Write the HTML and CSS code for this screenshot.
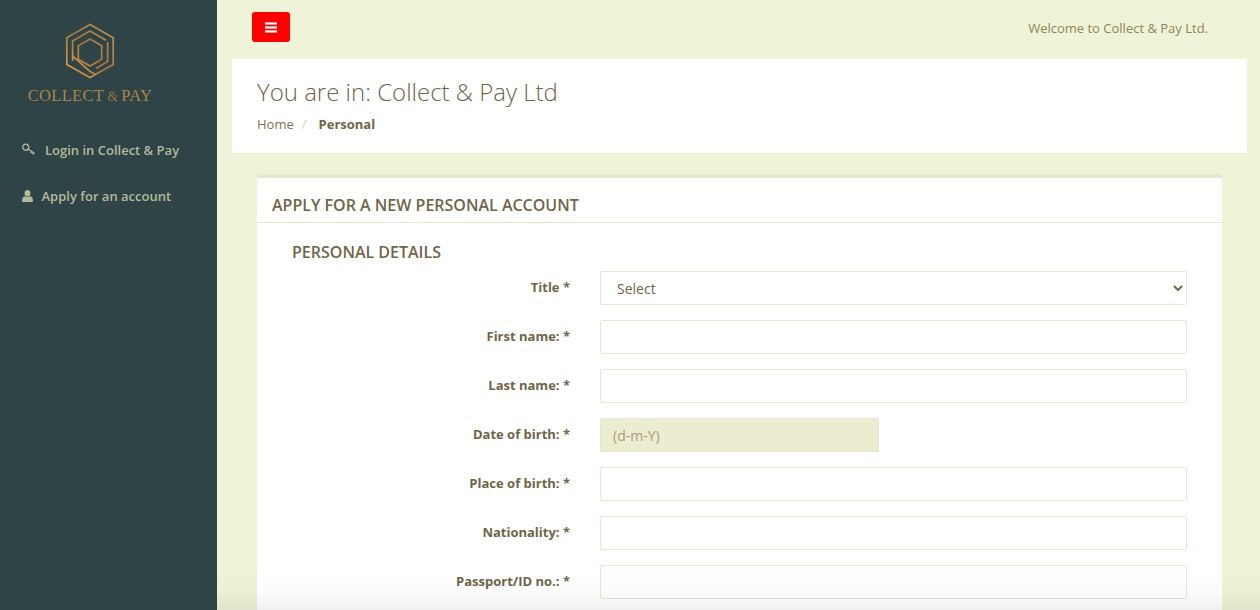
FILE: index.html
```html
<!DOCTYPE html>
<html lang="en">
<head>
<meta charset="utf-8">
<title>Collect &amp; Pay</title>
<link rel="stylesheet" href="styles.css">
</head>
<body>
<div class="app">
  <aside class="sidebar">
    <div class="brand">
      <svg class="brand-mark" width="50" height="56" viewBox="0 0 50 56" fill="none" stroke="url(#gold)" stroke-width="1.7" stroke-linejoin="miter">
        <defs>
          <linearGradient id="gold" gradientUnits="userSpaceOnUse" x1="0" y1="50" x2="50" y2="6">
            <stop offset="0" stop-color="#e0a24a"/>
            <stop offset="0.5" stop-color="#a8733a"/>
            <stop offset="1" stop-color="#c8924c"/>
          </linearGradient>
        </defs>
        <path d="M25 1.5 48.2 14.8V41.4L25 54.6 1.8 41.4V14.8Z"/>
        <path d="M25 16 36.7 22.7V36.3L25 43 13.3 36.3V22.7Z"/>
        <path d="M7.6 38V18L25 8 41 17.2"/>
        <path d="M42.6 19V38.5L31 45.5"/>
        <path d="M7.6 33 25 48.5 31 51.5"/>
      </svg>
      <div class="brand-name">COLLECT<span class="amp">&amp;</span>PAY</div>
    </div>
    <nav class="side-nav">
      <a class="side-link">
        <svg class="key-icon" width="14" height="14" viewBox="0 0 14 14" fill="none" stroke="#b6b89c" stroke-width="1.3"><circle cx="3.7" cy="4.2" r="3"/><path d="M6.3 6 12.6 10.6M9.6 8.5 8.6 10.1M11.5 9.9 10.6 11.5"/></svg>
        <span>Login in Collect &amp; Pay</span>
      </a>
      <a class="side-link user-link">
        <svg width="11" height="12" viewBox="0 0 11 12" fill="#b6b89c"><ellipse cx="5.5" cy="3.2" rx="2.9" ry="3.2"/><path d="M0.2 12V9.2C0.2 7.4 1.6 6.4 3 6.2 4.4 7.2 6.6 7.2 8 6.2 9.4 6.4 10.8 7.4 10.8 9.2V12Z"/></svg>
        <span>Apply for an account</span>
      </a>
    </nav>
  </aside>
  <main class="main">
    <header class="topbar">
      <button class="menu-btn" type="button" aria-label="Menu">
        <svg width="12" height="11" viewBox="0 0 12 11" fill="#fff"><rect width="12" height="2.2" y="0.4"/><rect width="12" height="2.2" y="4.4"/><rect width="12" height="2.2" y="8.4"/></svg>
      </button>
      <p class="welcome">Welcome to Collect &amp; Pay Ltd.</p>
    </header>
    <section class="page-head">
      <h1>You are in: Collect &amp; Pay Ltd</h1>
      <ol class="crumbs">
        <li>Home</li>
        <li class="sep">/</li>
        <li class="current">Personal</li>
      </ol>
    </section>
    <section class="card">
      <h2 class="card-title">APPLY FOR A NEW PERSONAL ACCOUNT</h2>
      <form class="form">
        <h3 class="form-title">PERSONAL DETAILS</h3>
        <div class="row"><label>Title *</label>
          <div class="select-wrap"><select class="control"><option>Select</option></select></div></div>
        <div class="row"><label>First name: *</label><input class="control" type="text"></div>
        <div class="row"><label>Last name: *</label><input class="control" type="text"></div>
        <div class="row"><label>Date of birth: *</label><input class="control date" type="text" placeholder="(d-m-Y)" readonly></div>
        <div class="row"><label>Place of birth: *</label><input class="control" type="text"></div>
        <div class="row"><label>Nationality: *</label><input class="control" type="text"></div>
        <div class="row"><label>Passport/ID no.: *</label><input class="control" type="text"></div>
      </form>
    </section>
  </main>
</div>
<div class="fade"></div>
</body>
</html>
```
FILE: styles.css
```css
* { box-sizing: border-box; }
html, body { margin: 0; height: 100%; overflow: hidden; }
body {
  font-family: "Open Sans", "Liberation Sans", sans-serif;
  font-size: 13px;
  color: #6f6547;
  background: #eff3d7;
}
.app { display: flex; height: 610px; overflow: hidden; }
.sidebar { width: 217px; flex: none; background: #2e4446; }
.brand { display: flex; flex-direction: column; align-items: center; width: 180px; padding-top: 23px; }
.brand-mark { display: block; }
.brand-name {
  margin-top: 7px;
  font-family: "Liberation Serif", serif;
  font-size: 16.5px;
  line-height: 20px;
  letter-spacing: 0.3px;
  color: #ad8246;
  white-space: nowrap;
}
.amp { font-size: 14px; margin: 0 3px; color: #96703f; }
.side-nav { display: flex; flex-direction: column; margin-top: 20px; padding-left: 22px; }
.side-link {
  display: flex;
  align-items: center;
  gap: 9px;
  height: 46px;
  font-weight: 600;
  font-size: 13px;
  color: #b6b89c;
}
.user-link { gap: 8.5px; }
.main { flex: 1; min-width: 0; padding: 0 13px 0 15px; }
.topbar { display: flex; align-items: center; justify-content: space-between; height: 59px; padding: 0 39px 3px 20px; }
.menu-btn {
  display: flex; align-items: center; justify-content: center;
  width: 38px; height: 30px; margin-top: -2px; padding: 0;
  border: 0; border-radius: 3px; background: #fe0000;
}
.welcome { margin: 0; font-size: 13px; color: #8f8562; }
.page-head { height: 95px; padding: 17px 25px 0; background: #fff; border-bottom: 1px solid #e8ebd0; }
.page-head h1 { margin: 0; font-size: 24px; line-height: 31px; font-weight: 300; color: #6f6547; }
.crumbs { display: flex; list-style: none; margin: 8px 0 0; padding: 0; line-height: 18px; color: #7d7355; }
.sep { margin: 0 12px 0 8px; color: #d6d6b0; }
.current { font-weight: 700; color: #6f6547; }
.card {
  margin: 20px 25px 0;
  height: 500px;
  background: #fff;
  border-top: 4px solid #e6e9cf;
}
.card-title {
  margin: 0;
  height: 45px;
  padding: 17px 15px 0;
  font-size: 16px;
  line-height: 20px;
  font-weight: 600;
  color: #6f6547;
  border-bottom: 1px solid #e6e9c9;
}
.form { padding: 0 35px; }
.form-title { margin: 19px 0 8px; padding-left: 0; font-size: 16px; line-height: 21px; font-weight: 600; color: #6f6547; }
.row { display: flex; align-items: flex-start; margin-bottom: 15px; }
.row label { width: 278px; flex: none; padding-top: 7px; text-align: right; font-weight: 700; font-size: 13px; line-height: 18px; color: #6f6547; margin-right: 30px; }
.select-wrap { width: 587px; }
.control {
  display: block;
  width: 587px;
  height: 34px;
  padding: 0 12px;
  border: 1px solid #e6e9c9;
  border-radius: 2px;
  background: #fff;
  font: 14px "Open Sans", "Liberation Sans", sans-serif;
  color: #6f6547;
  outline: none;
}
select.control { padding-left: 12px; }
.date { width: 279px; background: #ecedd0; }
.date::placeholder { color: #a89c78; opacity: 1; }
.fade {
  position: fixed; left: 217px; right: 0; bottom: 0; height: 42px;
  background: linear-gradient(to bottom, rgba(0,0,0,0), rgba(0,0,0,0.012) 50%, rgba(0,0,0,0.055));
  pointer-events: none;
}
```
